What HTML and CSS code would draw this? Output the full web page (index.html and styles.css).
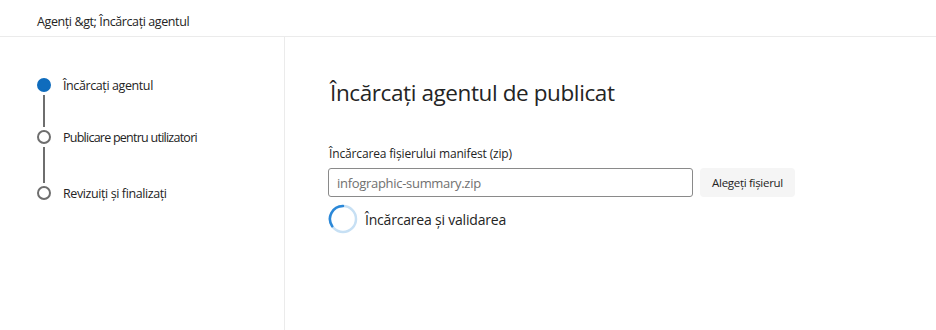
FILE: index.html
```html
<!DOCTYPE html>
<html lang="ro">
<head>
<meta charset="utf-8">
<title>Încărcați agentul</title>
<link rel="stylesheet" href="styles.css">
</head>
<body>
<header class="topbar">
  <span class="crumb">Agenți &amp;gt; Încărcați agentul</span>
</header>
<div class="layout">
  <aside class="sidebar">
    <ol class="steps">
      <li class="step active">
        <span class="marker"><span class="dot"></span></span>
        <span class="label">Încărcați agentul</span>
      </li>
      <li class="connector"><span class="line"></span></li>
      <li class="step">
        <span class="marker"><span class="dot"></span></span>
        <span class="label narrow">Publicare pentru utilizatori</span>
      </li>
      <li class="connector c2"><span class="line"></span></li>
      <li class="step">
        <span class="marker"><span class="dot"></span></span>
        <span class="label">Revizuiți și finalizați</span>
      </li>
    </ol>
  </aside>
  <main class="content">
    <h1 class="title">Încărcați agentul de publicat</h1>
    <label class="field-label" for="manifest">Încărcarea fișierului manifest (zip)</label>
    <div class="field-row">
      <input id="manifest" class="text-input" type="text" placeholder="infographic-summary.zip" readonly>
      <button class="btn" type="button">Alegeți fișierul</button>
    </div>
    <div class="status">
      <svg class="spinner" width="30" height="30" viewBox="0 0 30 30" aria-hidden="true">
        <circle cx="15" cy="15" r="13" fill="none" stroke="#c7e0f4" stroke-width="2.5"/>
        <path d="M4.2 22.3 A13 13 0 0 1 15 2" fill="none" stroke="#2b88d8" stroke-width="2.5" stroke-linecap="round"/>
      </svg>
      <span class="status-text">Încărcarea și validarea</span>
    </div>
  </main>
</div>
</body>
</html>
```
FILE: styles.css
```css
* { box-sizing: border-box; }
html, body { margin: 0; padding: 0; background: #fff; }
body {
  font-family: "Open Sans", "Noto Sans", "Liberation Sans", sans-serif;
  color: #242424;
  width: 936px;
  height: 330px;
  overflow: hidden;
}
.topbar {
  height: 37px;
  border-bottom: 1px solid #ebebeb;
  padding: 9px 0 0 37px;
}
.crumb {
  font-size: 12.5px;
  letter-spacing: -0.4px;
  color: #242424;
}
.layout {
  display: flex;
  height: 293px;
}
.sidebar {
  width: 285px;
  border-right: 1px solid #ebebeb;
  padding: 41px 0 0 37px;
}
.steps {
  list-style: none;
  margin: 0;
  padding: 0;
}
.step {
  display: flex;
  align-items: center;
  height: 14px;
}
.marker {
  width: 14px;
  height: 14px;
  flex: none;
  display: flex;
}
.dot {
  width: 14px;
  height: 14px;
  border-radius: 50%;
  border: 2px solid #6e6e6e;
  background: #fff;
}
.step.active .dot {
  background: #0f6cbd;
  border-color: #0f6cbd;
}
.label {
  margin-left: 12px;
  font-size: 12.5px;
  letter-spacing: -0.4px;
  color: #242424;
  position: relative;
  top: 0;
}
.label.narrow { letter-spacing: -0.75px; }
.connector {
  height: 38px;
  display: flex;
  justify-content: flex-start;
  padding: 3px 0;
}
.connector.c2 { height: 42px; }
.line {
  margin-left: 6px;
  width: 2px;
  background: #6e6e6e;
}
.content {
  flex: 1;
  padding: 41px 0 0 45px;
}
.title {
  margin: 0;
  font-size: 22.5px;
  font-weight: 400;
  letter-spacing: -0.4px;
  color: #242424;
  line-height: 30px;
}
.field-label {
  display: block;
  margin-top: 38px;
  margin-left: -1px;
  font-size: 12px;
  letter-spacing: -0.15px;
  color: #242424;
  line-height: 16px;
}
.field-row {
  display: flex;
  gap: 7px;
  margin-top: 6px;
  margin-left: -2px;
}
.text-input {
  width: 365px;
  height: 29px;
  border: 1px solid #8a8a8a;
  border-radius: 3px;
  padding: 0 8px;
  font: inherit;
  font-size: 13px;
  letter-spacing: -0.3px;
  color: #242424;
  background: #fff;
  outline: none;
}
.text-input::placeholder { color: #707070; }
.btn {
  width: 95px;
  height: 29px;
  border: none;
  border-radius: 4px;
  background: #f5f5f5;
  font: inherit;
  font-size: 11.5px;
  letter-spacing: -0.3px;
  color: #242424;
  padding: 0;
}
.status {
  display: flex;
  align-items: center;
  gap: 7px;
  margin-top: 7px;
  margin-left: -2px;
}
.spinner { flex: none; }
.status-text {
  font-size: 14px;
  letter-spacing: -0.2px;
  color: #242424;
}
```
